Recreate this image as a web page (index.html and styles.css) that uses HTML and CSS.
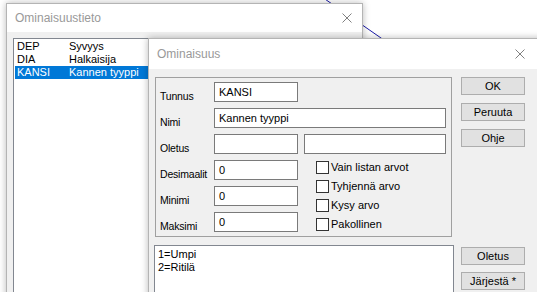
FILE: index.html
```html
<!DOCTYPE html>
<html lang="fi">
<head>
  <meta charset="UTF-8" />
  <title>Ominaisuus</title>
  <link rel="stylesheet" href="styles.css">
</head>
<body>
  <div class="desk">
    <svg class="lines" width="537" height="292">
      <line x1="322" y1="-3" x2="545" y2="152" stroke="#1a1aa8" stroke-width="1" />
    </svg>

    <section class="dlg dlg-list">
      <div class="titlebar">
        <span>Ominaisuustieto</span>
        <svg class="close" width="10" height="10" viewBox="0 0 10 10">
          <path d="M0.5 0.5 L9.5 9.5 M9.5 0.5 L0.5 9.5" stroke="#808080" stroke-width="1" />
        </svg>
      </div>
      <div class="dlg-body">
        <ul class="listbox">
          <li><span class="code">DEP</span><span>Syvyys</span></li>
          <li><span class="code">DIA</span><span>Halkaisija</span></li>
          <li class="selected"><span class="code">KANSI</span><span>Kannen tyyppi</span></li>
        </ul>
      </div>
    </section>

    <section class="dlg dlg-prop">
      <div class="titlebar">
        <span>Ominaisuus</span>
        <svg class="close" width="10" height="10" viewBox="0 0 10 10">
          <path d="M0.5 0.5 L9.5 9.5 M9.5 0.5 L0.5 9.5" stroke="#808080" stroke-width="1" />
        </svg>
      </div>
      <div class="prop-body">
        <div class="groupbox">
          <div class="row">
            <label class="lbl">Tunnus</label>
            <div class="field short">KANSI</div>
          </div>
          <div class="row">
            <label class="lbl">Nimi</label>
            <div class="field wide">Kannen tyyppi</div>
          </div>
          <div class="row">
            <label class="lbl">Oletus</label>
            <div class="field short"></div>
            <div class="field second"></div>
          </div>
          <div class="lower">
            <div class="nums">
              <div class="row">
                <label class="lbl">Desimaalit</label>
                <div class="field short">0</div>
              </div>
              <div class="row">
                <label class="lbl">Minimi</label>
                <div class="field short">0</div>
              </div>
              <div class="row">
                <label class="lbl">Maksimi</label>
                <div class="field short">0</div>
              </div>
            </div>
            <div class="checks">
              <div class="check"><span class="box"></span>Vain listan arvot</div>
              <div class="check"><span class="box"></span>Tyhjennä arvo</div>
              <div class="check"><span class="box"></span>Kysy arvo</div>
              <div class="check"><span class="box"></span>Pakollinen</div>
            </div>
          </div>
        </div>

        <div class="btns">
          <button>OK</button>
          <button>Peruuta</button>
          <button>Ohje</button>
        </div>

        <div class="values">
          <div>1=Umpi</div>
          <div>2=Ritilä</div>
        </div>

        <div class="btns lower-btns">
          <button>Oletus</button>
          <button>Järjestä *</button>
        </div>
      </div>
    </section>
  </div>
</body>
</html>
```

FILE: styles.css
```css
body {
  margin: 0;
  font-family: "Liberation Sans", Arial, sans-serif;
  font-size: 11px;
  color: #000;
  background: #fff;
  overflow: hidden;
}
.desk {
  position: relative;
  width: 537px;
  height: 292px;
  overflow: hidden;
}
.lines {
  position: absolute;
  left: 0;
  top: 0;
}
.dlg {
  position: absolute;
  background: #f0f0f0;
  border: 1px solid #b4b4b4;
  box-shadow: 0 0 7px rgba(0, 0, 0, 0.28);
}
.titlebar {
  display: flex;
  align-items: center;
  background: #fff;
  padding-left: 8px;
  font-size: 12px;
  color: #999;
}
.close {
  margin-left: auto;
}

/* Ominaisuustieto */
.dlg-list {
  left: 6px;
  top: 3px;
  width: 355px;
  height: 320px;
}
.dlg-list .titlebar {
  height: 28px;
  padding-bottom: 1px;
  box-sizing: border-box;
}
.dlg-list .close {
  margin-right: 10px;
}
.dlg-body {
  padding: 6px;
}
.listbox {
  list-style: none;
  margin: 0;
  padding: 1px 0 0 1px;
  height: 260px;
  background: #fff;
  border: 1px solid #828790;
}
.listbox li {
  display: flex;
  height: 13px;
  line-height: 13px;
  padding-left: 2px;
}
.listbox .code {
  width: 52px;
}
.listbox li.selected {
  background: #0078d7;
  color: #fff;
}

/* Ominaisuus */
.dlg-prop {
  left: 148px;
  top: 38px;
  width: 400px;
  height: 280px;
}
.dlg-prop .titlebar {
  height: 30px;
}
.dlg-prop .close {
  margin-right: 24px;
}
.prop-body {
  display: grid;
  grid-template-columns: 299px 64px;
  grid-template-rows: 160px auto;
  column-gap: 7px;
  row-gap: 8px;
  padding: 8px 0 0 6px;
}
.groupbox {
  width: 297px;
  box-sizing: border-box;
  border: 1px solid #a0a0a0;
  padding: 4px 0 0 4px;
}
.row {
  display: flex;
  height: 20px;
  margin-bottom: 6px;
}
.lbl {
  width: 54px;
  flex: none;
  padding-top: 8px;
  line-height: 13px;
  font-size: 10.5px;
  letter-spacing: -0.2px;
}
.field {
  height: 20px;
  box-sizing: border-box;
  background: #fff;
  border: 1px solid #7a7a7a;
  padding-left: 4px;
  line-height: 18px;
}
.field.short {
  width: 84px;
}
.field.wide {
  width: 232px;
}
.field.second {
  width: 142px;
  margin-left: 6px;
}
.lower {
  display: flex;
}
.checks {
  display: flex;
  flex-direction: column;
  gap: 6px;
  margin-left: 18px;
  padding-top: 1px;
}
.check {
  display: flex;
  align-items: center;
  height: 13px;
  line-height: 13px;
}
.box {
  width: 13px;
  height: 13px;
  box-sizing: border-box;
  border: 1px solid #333;
  background: #fff;
  margin-right: 2px;
}
.btns {
  display: flex;
  flex-direction: column;
  gap: 8px;
}
.lower-btns {
  padding-top: 2px;
  gap: 7px;
}
button {
  width: 64px;
  height: 18px;
  padding: 0;
  font-family: inherit;
  font-size: 11px;
  color: #000;
  background: #e1e1e1;
  border: 1px solid #adadad;
}
.values {
  margin-left: -1px;
  height: 70px;
  background: #fff;
  border: 1px solid #828790;
  padding: 2px 3px;
  line-height: 13px;
}
```
